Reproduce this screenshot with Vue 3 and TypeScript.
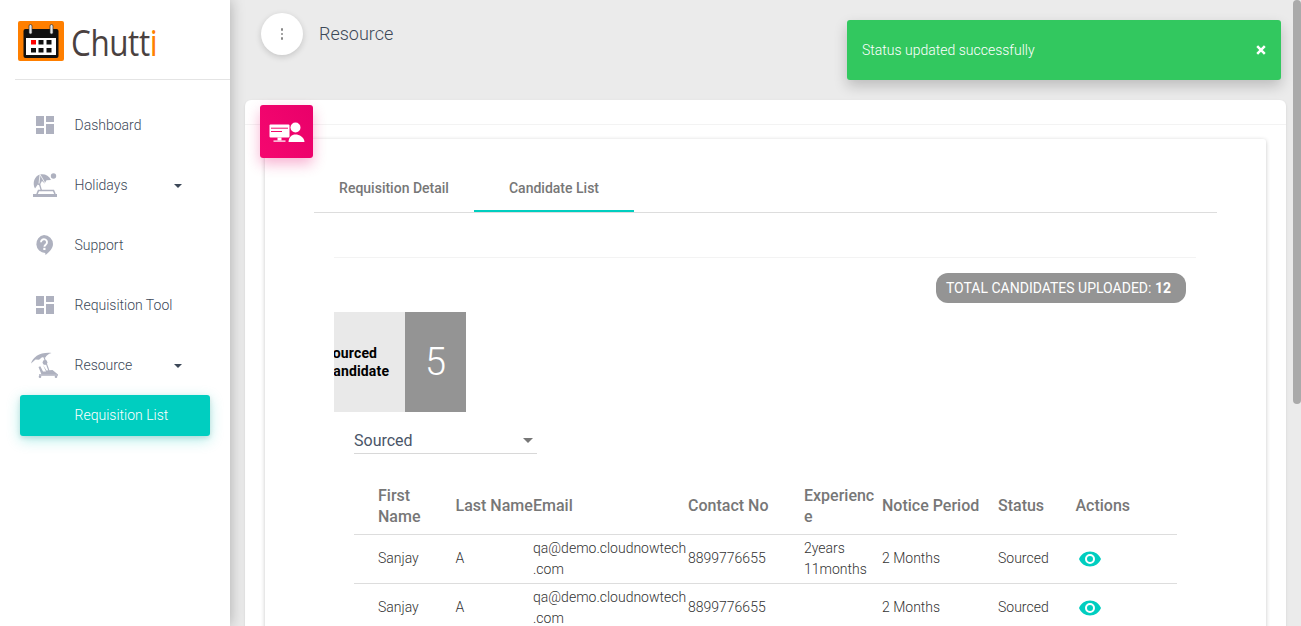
<script setup lang="ts">
interface Row { first: string; last: string; email: string; contact: string; exp: string; notice: string; status: string }
const rows: Row[] = [
  { first: 'Sanjay', last: 'A', email: 'qa@demo.cloudnowtech.com', contact: '8899776655', exp: '2years 11months', notice: '2 Months', status: 'Sourced' },
  { first: 'Sanjay', last: 'A', email: 'qa@demo.cloudnowtech.com', contact: '8899776655', exp: '', notice: '2 Months', status: 'Sourced' },
]
</script>

<template>
  <div class="page">
    <aside class="sidebar">
      <div class="brand">
        <svg class="logo" viewBox="0 0 46 40" width="46" height="40">
          <rect width="46" height="40" rx="2" fill="#ff7f00" />
          <rect x="5.5" y="8" width="35" height="29" rx="2" fill="#111" />
          <rect x="8" y="17" width="30" height="17" fill="#fff" />
          <rect x="11" y="3.500" width="3" height="9.500" rx="1.500" fill="#e8e8e8" stroke="#333" stroke-width=".7" />
          <rect x="32" y="3.500" width="3" height="9.500" rx="1.500" fill="#e8e8e8" stroke="#333" stroke-width=".7" />
          <rect x="13" y="19" width="5" height="4.500" fill="#f00" />
          <rect x="20.500" y="19" width="5" height="4.500" fill="#111" />
          <rect x="28.500" y="19" width="5" height="4.500" fill="#111" />
          <rect x="13" y="27" width="5" height="4.500" fill="#111" />
          <rect x="20.500" y="27" width="5" height="4.500" fill="#111" />
          <rect x="28.500" y="27" width="5" height="4.500" fill="#111" />
        </svg>
        <span class="word">Chutt<span class="orange">i</span></span>
      </div>
      <nav class="nav">
        <div class="item">
          <svg class="ico" viewBox="0 0 18 18"><path d="M0 0h8v10H0zM10 0h8v6h-8zM10 8h8v10h-8zM0 12h8v6H0z" fill="#aeb1bf" /></svg>
          <span>Dashboard</span>
        </div>
        <div class="item">
          <svg class="ico holiday" viewBox="0 0 26 25">
            <path d="M3 15.500C0 10 2.500 3 8 1.500c4.500-1 9 1 11 5.500l-4.500.3-1.800 3.200-2.700-2.500-2.500 4.500-1.700-1z" fill="#aeb1bf" />
            <path d="M8 1.500l-1 9M8 1.500l5 8.500" stroke="#fff" stroke-width=".8" />
            <circle cx="21.500" cy="3" r="2.700" fill="#aeb1bf" />
            <path d="M7.500 11l2 7" stroke="#aeb1bf" stroke-width="1.300" />
            <path d="M5 21l1.500-3.500h15L23 21" fill="none" stroke="#aeb1bf" stroke-width="1.600" />
            <rect x="1" y="21" width="24" height="3" fill="#aeb1bf" />
          </svg>
          <span>Holidays</span>
          <i class="caret"></i>
        </div>
        <div class="item">
          <svg class="ico support" viewBox="0 0 18 20"><path d="M9 0a9 9 0 0 1 9 9c0 4.500-4 8.500-7.500 11l-.3-2.100A9 9 0 0 1 9 0z" fill="#aeb1bf" /><path d="M6 7.200a3 3 0 1 1 4.800 2.400c-1 .7-1.400 1.100-1.400 2.200" fill="none" stroke="#fff" stroke-width="1.900" /><rect x="8.300" y="12.800" width="2.200" height="2.200" fill="#fff" /></svg>
          <span>Support</span>
        </div>
        <div class="item">
          <svg class="ico" viewBox="0 0 18 18"><path d="M0 0h8v10H0zM10 0h8v6h-8zM10 8h8v10h-8zM0 12h8v6H0z" fill="#aeb1bf" /></svg>
          <span>Requisition Tool</span>
        </div>
        <div class="item">
          <svg class="ico resource" viewBox="0 0 28 26">
            <path d="M0 11.500C2 5 9 0 20.500 1 17 2 15.500 3.500 14.500 5.500l-3.500-.3-3 2.600-3.500-.2z" fill="#aeb1bf" />
            <path d="M13 5l5 14" stroke="#aeb1bf" stroke-width="1.100" />
            <circle cx="14" cy="10.500" r="2.400" fill="#aeb1bf" />
            <path d="M12 13l3.500 5.500 6-.5 5.500 4.500H10.500L7.500 15l1.800-.8 2.700 5.300h3z" fill="#aeb1bf" />
            <path d="M8 23h19" stroke="#aeb1bf" stroke-width="1.500" />
            <circle cx="9" cy="24.700" r="1.300" fill="#aeb1bf" />
            <circle cx="25" cy="24.700" r="1.300" fill="#aeb1bf" />
          </svg>
          <span>Resource</span>
          <i class="caret"></i>
        </div>
        <div class="item active"><span>Requisition List</span></div>
      </nav>
    </aside>

    <main class="main">
      <header class="topbar">
        <button class="menu-btn" type="button" aria-label="menu"><i></i><i></i><i></i></button>
        <span class="title">Resource</span>
      </header>

      <section class="outer">
        <div class="badge">
          <svg viewBox="0 0 37 22" width="37" height="22">
            <rect x="1.500" y="3.500" width="20" height="13" rx="1" fill="#fff" />
            <path d="M3 7.200h17" stroke="#f50a6b" stroke-width="1" />
            <path d="M3 10.500h11" stroke="#f50a6b" stroke-width="1" />
            <rect x="9.500" y="16.500" width="4" height="3" fill="#fff" />
            <rect x="5.500" y="19.500" width="12" height="1.200" fill="#fff" />
            <circle cx="27.500" cy="6.500" r="5" fill="#fff" />
            <path d="M20.500 21c.3-5 3.200-7.500 7-7.500S36.200 16 36.500 21z" fill="#fff" />
          </svg>
        </div>
        <div class="strip"></div>
        <div class="card">
          <div class="tabs">
            <div class="tab">Requisition Detail</div>
            <div class="tab on">Candidate List</div>
          </div>
          <div class="inner">
            <div class="pill-row"><span class="pill">TOTAL CANDIDATES UPLOADED: <b>12</b></span></div>
            <div class="tile">
              <div class="tile-label"><div class="tile-text">Sourced Candidate</div></div>
              <div class="tile-num">5</div>
            </div>
            <div class="select"><span>Sourced</span><i class="caret grey"></i></div>
            <table class="grid">
              <colgroup>
                <col class="c-wide" /><col class="c-narrow" /><col class="c-email" /><col class="c-mid" />
                <col class="c-exp" /><col class="c-mid" /><col class="c-narrow" /><col />
              </colgroup>
              <thead>
                <tr><th>First Name</th><th>Last Name</th><th>Email</th><th>Contact No</th><th>Experience</th><th>Notice Period</th><th>Status</th><th>Actions</th></tr>
              </thead>
              <tbody>
                <tr v-for="(r, i) in rows" :key="i">
                  <td>{{ r.first }}</td><td>{{ r.last }}</td><td class="brk">{{ r.email }}</td><td>{{ r.contact }}</td>
                  <td>{{ r.exp }}</td><td>{{ r.notice }}</td><td>{{ r.status }}</td>
                  <td class="act">
                    <svg viewBox="0 0 24 24" width="24" height="24"><path d="M12 4.500C7 4.500 2.700 7.600 1 12c1.700 4.400 6 7.500 11 7.500s9.300-3.100 11-7.500c-1.700-4.400-6-7.500-11-7.500zM12 17a5 5 0 1 1 0-10 5 5 0 0 1 0 10zm0-8a3 3 0 1 0 0 6 3 3 0 0 0 0-6z" fill="#00cec0" /></svg>
                  </td>
                </tr>
              </tbody>
            </table>
          </div>
        </div>
      </section>
    </main>

    <div class="toast">
      <span>Status updated successfully</span>
      <svg viewBox="0 0 10 10" width="10" height="10"><path d="M1.200 1.200l7.600 7.600M8.800 1.200l-7.600 7.600" stroke="#fff" stroke-width="2.500" /></svg>
    </div>
    <div class="scrollbar"></div>
  </div>
</template>

<style>
html, body { margin: 0; height: 100%; overflow: hidden; }
</style>

<style scoped>
.page {
  display: flex;
  height: 626px;
  overflow: hidden;
  position: relative;
  background: #ebebeb;
  font-family: Roboto, "Liberation Sans", sans-serif;
  font-weight: 300;
  color: #3c4858;
}
.sidebar {
  width: 230px;
  flex: none;
  background: #fff;
  box-shadow: 0 0 14px rgba(0, 0, 0, .28);
  z-index: 2;
  box-sizing: border-box;
  padding: 0 20px 0 15px;
}
.brand {
  border-bottom: 1px solid #e4e4e4;
  display: flex;
  align-items: flex-start;
  padding: 21px 0 0 3px;
  height: 58px;
  width: 212px;
  gap: 7px;
}
.logo { flex: none; }
.word {
  font-family: "Open Sans", sans-serif;
  font-weight: 400;
  font-size: 37px;
  line-height: 42px;
  color: #4a4140;
  letter-spacing: -.5px;
  transform: scaleX(.85);
  transform-origin: left center;
  display: inline-block;
}
.orange { color: #ff7f00; }
.nav { padding-top: 15px; }
.item {
  height: 60px;
  display: flex;
  align-items: center;
  font-size: 14px;
  color: #3c4858;
  position: relative;
  margin-left: 5px;
  width: 190px;
  padding-left: 54.500px;
  box-sizing: border-box;
}
.ico { position: absolute; left: 15.500px; top: 21px; width: 18px; height: 18px; }
.ico.support { top: 20px; height: 20px; left: 15px; }
.ico.holiday { left: 12px; top: 18px; width: 26px; height: 25px; }
.ico.resource { left: 10.500px; top: 17px; width: 28px; height: 26px; }
.caret {
  position: absolute;
  right: 28px;
  top: 29px;
  border: 4px solid transparent;
  border-top-color: #3c4858;
  border-bottom: 0;
}
.item.active {
  height: 41px;
  padding-bottom: 2px;
  background: #00cec0;
  color: #fff;
  border-radius: 3px;
  box-shadow: 0 4px 14px rgba(0, 206, 192, .3), 0 2px 5px rgba(0, 0, 0, .12);
}
.main { flex: 1; min-width: 0; padding: 0 15px; }
.topbar { height: 100px; display: flex; align-items: flex-start; padding-top: 13px; box-sizing: border-box; gap: 16px; padding-left: 16px; }
.menu-btn {
  width: 42px; height: 42px; border: 0; border-radius: 50%; background: #fff; padding: 0;
  display: flex; flex-direction: column; align-items: center; justify-content: center; gap: 2px;
  box-shadow: 0 2px 6px rgba(0, 0, 0, .16);
}
.menu-btn i { width: 2.500px; height: 2.500px; border-radius: 50%; background: #888; }
.title { font-size: 18px; line-height: 42px; color: #3c4858; }
.outer {
  position: relative;
  width: 1041px;
  height: 540px;
  background: #fff;
  border-radius: 6px;
  box-shadow: 0 1px 3px rgba(0, 0, 0, .1);
  box-sizing: border-box;
  padding: 24px 20px 0;
}
.badge {
  position: absolute;
  left: 15px;
  top: 5px;
  width: 53px;
  height: 53px;
  border-radius: 3px;
  background: linear-gradient(60deg, #f5076f, #e9006a);
  box-shadow: 0 6px 14px rgba(233, 0, 106, .3);
  display: flex;
  align-items: center;
  justify-content: center;
  z-index: 1;
}
.strip { position: absolute; left: 0; right: 0; top: 24px; height: 1px; background: #f3f3f3; }
.card {
  width: 1001px;
  margin-top: 15px;
  background: #fff;
  border-radius: 3px;
  box-shadow: 0 1px 4px rgba(0, 0, 0, .22);
  padding: 25px 49px 0 49px;
  box-sizing: border-box;
  height: 520px;
}
.tabs { display: flex; height: 48px; border-bottom: 1px solid #ddd; }
.tab {
  width: 160px; text-align: center; font-size: 14px; font-weight: 500; color: #777; line-height: 49px; box-sizing: border-box; height: 48px;
}
.tab.on { border-bottom: 2px solid #00cec0; }
.inner { padding: 44px 20px 0; }
.pill-row { border-top: 1px solid #f3f3f3; display: flex; justify-content: flex-end; padding: 15px 10px 0 0; width: 862px; box-sizing: border-box; }
.pill {
  background: #949494; color: #fff; border-radius: 12px; height: 30px; line-height: 30px; padding: 0 15px 0 10px; font-size: 14px; font-weight: 400; white-space: nowrap;
}
.pill b { font-weight: 700; }
.tile { display: flex; width: 132px; height: 100px; margin-top: 9px; }
.tile-label { width: 71px; background: #e9e9e9; overflow: hidden; display: flex; align-items: center; justify-content: flex-start; }
.tile-text { flex: none; width: 80px; margin-left: -10px; font-size: 14px; font-weight: 700; letter-spacing: .15px; color: #000; line-height: 18px; text-align: left; }
.tile-num { width: 61px; background: #949494; color: #fff; font-size: 38px; font-weight: 300; display: flex; align-items: center; justify-content: center; }
.select {
  position: relative; width: 183px; height: 42px; margin: 0 0 0 20px; border-bottom: 1px solid #d8d8d8; font-size: 16px; font-weight: 400; color: #4a5568;
  display: flex; align-items: flex-end; box-sizing: border-box; padding-bottom: 3px;
}
.caret.grey { border-width: 5px; border-bottom: 0; border-top-color: #777; right: 4px; top: 26px; }
.grid { width: 823px; margin: 22px 0 0 20px; border-collapse: collapse; table-layout: fixed; color: #333; }
.c-wide { width: 101.500px; }
.c-narrow { width: 77.500px; }
.c-exp { width: 78px; }
.c-email { width: 155px; }
.c-mid { width: 116px; }
.grid th {
  font-size: 16px; font-weight: 500; color: #777; text-align: left; padding: 1px 0 0; line-height: 21px; height: 57px; vertical-align: middle; overflow-wrap: anywhere;
}
.grid th:first-child, .grid td:first-child { padding-left: 24px; }
.grid td { font-size: 14px; font-weight: 300; line-height: 21px; height: 47px; padding: 0 0 1px; border-top: 1px solid #ddd; vertical-align: middle; overflow-wrap: anywhere; }
.grid td.act { line-height: 0; padding-left: 2.500px; }
.toast {
  position: absolute;
  left: 847px;
  top: 20px;
  width: 434px;
  height: 60px;
  background: #32c85f;
  border-radius: 3px;
  box-shadow: 0 6px 14px rgba(0, 0, 0, .2);
  color: #fff;
  font-size: 14px;
  display: flex;
  align-items: center;
  justify-content: space-between;
  padding: 0 15px;
  box-sizing: border-box;
  z-index: 5;
}
.scrollbar { position: absolute; right: 0; top: 0; width: 8px; height: 404px; background: #aaa; border-radius: 4px; z-index: 6; }
</style>
